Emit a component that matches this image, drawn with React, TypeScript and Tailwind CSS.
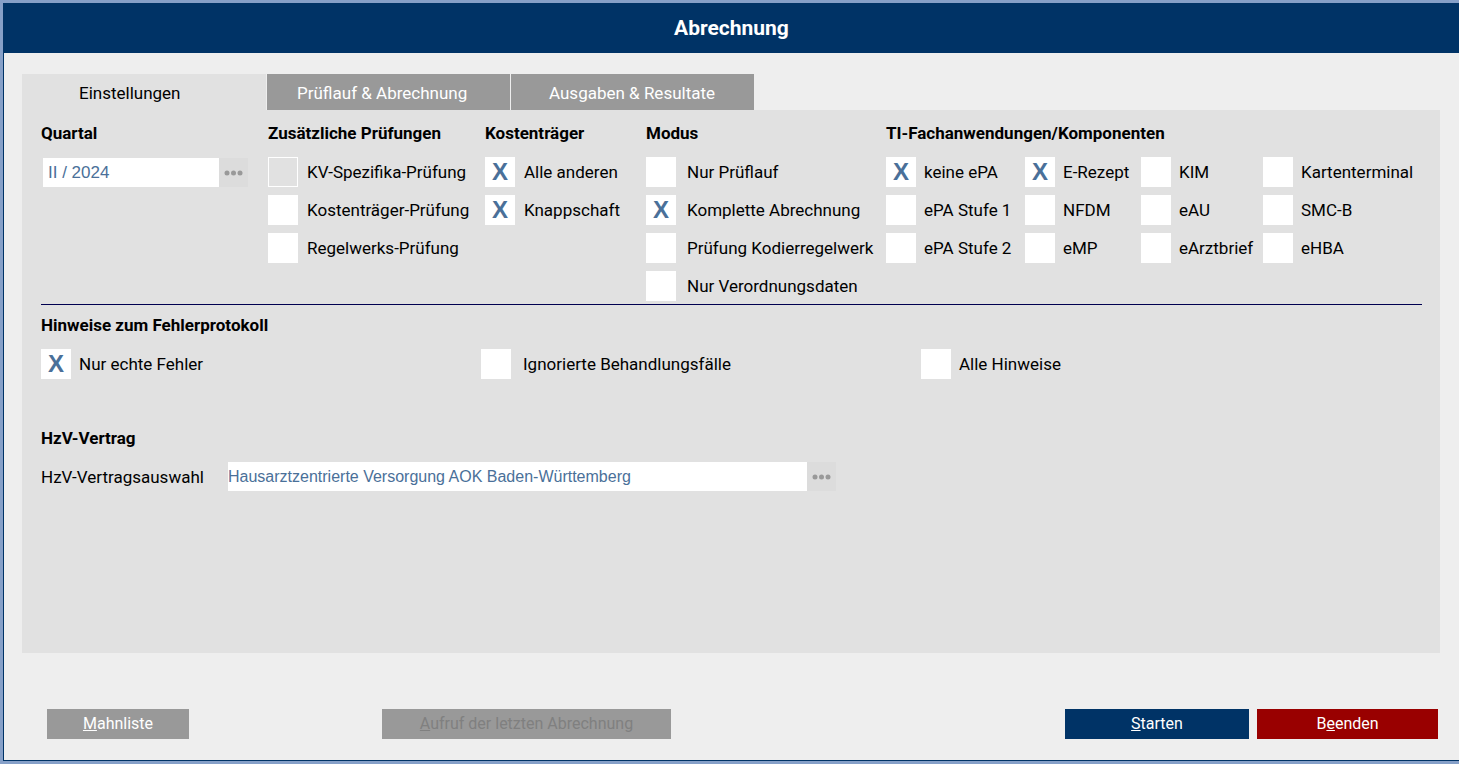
import { useState } from 'react';
import { clsx } from 'clsx';

interface Option {
  id: string;
  label: string;
  checked?: boolean;
  disabled?: boolean;
  gap?: string;
}

// --- OPTIONEN ---
const pruefungen: Option[] = [
  { id: 'kv-spezifika', label: 'KV-Spezifika-Prüfung', disabled: true },
  { id: 'kt-pruefung', label: 'Kostenträger-Prüfung' },
  { id: 'regelwerk', label: 'Regelwerks-Prüfung' },
];

const kostentraeger: Option[] = [
  { id: 'alle-anderen', label: 'Alle anderen', checked: true },
  { id: 'knappschaft', label: 'Knappschaft', checked: true },
];

const modus: Option[] = [
  { id: 'nur-prueflauf', label: 'Nur Prüflauf' },
  { id: 'komplett', label: 'Komplette Abrechnung', checked: true },
  { id: 'kodierregelwerk', label: 'Prüfung Kodierregelwerk' },
  { id: 'verordnungsdaten', label: 'Nur Verordnungsdaten' },
];

const komponenten: Option[] = [
  { id: 'keine-epa', label: 'keine ePA', checked: true },
  { id: 'e-rezept', label: 'E-Rezept', checked: true },
  { id: 'kim', label: 'KIM' },
  { id: 'kartenterminal', label: 'Kartenterminal' },
  { id: 'epa-1', label: 'ePA Stufe 1' },
  { id: 'nfdm', label: 'NFDM' },
  { id: 'eau', label: 'eAU' },
  { id: 'smc-b', label: 'SMC-B' },
  { id: 'epa-2', label: 'ePA Stufe 2' },
  { id: 'emp', label: 'eMP' },
  { id: 'earztbrief', label: 'eArztbrief' },
  { id: 'ehba', label: 'eHBA' },
];

const hinweise: Option[] = [
  { id: 'echte-fehler', label: 'Nur echte Fehler', checked: true },
  { id: 'ignorierte', label: 'Ignorierte Behandlungsfälle', gap: 'gap-3' },
  { id: 'alle-hinweise', label: 'Alle Hinweise' },
];

const tabs = [
  { label: 'Einstellungen', size: 'w-[245px] pl-[57px]' },
  { label: 'Prüflauf & Abrechnung', size: 'w-[244px] pl-[30px]' },
  { label: 'Ausgaben & Resultate', size: 'w-[243px] pl-[38px]' },
];

function Check({ option, gap = 'gap-2' }: { option: Option; gap?: string }) {
  const [checked, setChecked] = useState(!!option.checked);

  return (
    <div className={clsx('flex items-center', option.gap ?? gap)}>
      <div className="grid size-[30px] shrink-0 place-items-center">
        <input
          id={option.id}
          type="checkbox"
          checked={checked}
          disabled={option.disabled}
          onChange={(e) => setChecked(e.target.checked)}
          className="[grid-area:1/1] size-[30px] appearance-none border border-white bg-white disabled:bg-transparent"
        />
        {checked && (
          <span className="pointer-events-none [grid-area:1/1] font-['Liberation_Sans',sans-serif] text-2xl leading-[30px] font-bold text-[#4a7099]">
            X
          </span>
        )}
      </div>
      <label htmlFor={option.id} className="whitespace-nowrap">{option.label}</label>
    </div>
  );
}

function Group({ title, options, gap }: { title: string; options: Option[]; gap: string }) {
  return (
    <section>
      <h2 className="mb-3 font-bold whitespace-nowrap">{title}</h2>
      <div className="flex flex-col gap-2">
        {options.map((o) => <Check key={o.id} option={o} gap={gap} />)}
      </div>
    </section>
  );
}

function MoreButton({ label }: { label: string }) {
  return (
    <button aria-label={label} className="flex size-[29px] shrink-0 items-center justify-center bg-[#dcdcdc]">
      <svg width="20" height="6" viewBox="0 0 20 6" fill="#999999">
        <circle cx="3" cy="3" r="2.5" />
        <circle cx="9.5" cy="3" r="2.5" />
        <circle cx="16" cy="3" r="2.5" />
      </svg>
    </button>
  );
}

function App() {
  const [activeTab, setActiveTab] = useState(0);

  return (
    <div className="flex min-h-screen flex-col bg-[#86a0c8] pt-[3px] pb-[3px] pl-[3px] font-['Roboto',sans-serif] text-[17px] leading-6 text-black">
      <div className="flex flex-1 flex-col border-b border-l border-[#003366] bg-[#eeeeee]">
        <header className="flex h-[50px] items-center justify-center bg-[#003366]">
          <h1 className="text-[21px] font-bold text-white">Abrechnung</h1>
        </header>

        <main className="mt-[21px] mr-[19px] ml-[18px] flex flex-1 flex-col">
          {/* Reiter */}
          <div role="tablist" className="flex">
            {tabs.map((tab, i) => (
              <button
                key={tab.label}
                role="tab"
                aria-selected={i === activeTab}
                onClick={() => setActiveTab(i)}
                className={clsx(
                  'h-9 pt-[2px] text-left',
                  tab.size,
                  i < 2 && 'border-r border-[#eeeeee]',
                  i === activeTab ? 'bg-[#e1e1e1]' : 'bg-[#999999] text-white'
                )}
              >
                {tab.label}
              </button>
            ))}
          </div>

          <div className="flex-1 bg-[#e1e1e1] pt-[11px] pr-[18px] pb-6 pl-[19px]">
            <div className="grid grid-cols-[227fr_217fr_161fr_240fr_536fr] border-b border-[#000050] pb-[3px]">
              <section>
                <h2 className="mb-3 font-bold"><label htmlFor="quartal">Quartal</label></h2>
                <div className="flex pt-px pl-[2px]">
                  <input
                    id="quartal"
                    defaultValue="II / 2024"
                    className="h-[29px] w-44 bg-white px-[5px] font-['Liberation_Sans',sans-serif] text-[#4a7099] outline-none"
                  />
                  <MoreButton label="Quartal auswählen" />
                </div>
              </section>
              <Group title="Zusätzliche Prüfungen" options={pruefungen} gap="gap-[9px]" />
              <Group title="Kostenträger" options={kostentraeger} gap="gap-[9px]" />
              <Group title="Modus" options={modus} gap="gap-[11px]" />
              <section>
                <h2 className="mb-3 font-bold">TI-Fachanwendungen/Komponenten</h2>
                <div className="grid grid-cols-[139fr_116fr_122fr_159fr] gap-y-2">
                  {komponenten.map((o) => <Check key={o.id} option={o} />)}
                </div>
              </section>
            </div>

            <section className="pt-2">
              <h2 className="mb-3 font-bold">Hinweise zum Fehlerprotokoll</h2>
              <div className="grid grid-cols-[440fr_440fr_501fr]">
                {hinweise.map((o) => <Check key={o.id} option={o} />)}
              </div>
            </section>

            <section className="pt-[47px]">
              <h2 className="mb-3 font-bold">HzV-Vertrag</h2>
              <div className="flex items-center">
                <label htmlFor="hzv" className="w-[187px] shrink-0">HzV-Vertragsauswahl</label>
                <input
                  id="hzv"
                  defaultValue="Hausarztzentrierte Versorgung AOK Baden-Württemberg"
                  className="h-[29px] w-[579px] bg-white font-['Liberation_Sans',sans-serif] text-base text-[#4a7099] outline-none"
                />
                <MoreButton label="Vertrag auswählen" />
              </div>
            </section>
          </div>
        </main>

        {/* Aktionen */}
        <footer className="mt-14 mr-[21px] mb-[21px] ml-[43px] flex text-base">
          <button className="h-[30px] w-[142px] bg-[#999999] text-white"><u>M</u>ahnliste</button>
          <button disabled className="ml-[193px] h-[30px] w-[289px] bg-[#999999] text-[#808080]">
            <u>A</u>ufruf der letzten Abrechnung
          </button>
          <button className="mr-2 ml-auto h-[30px] w-[184px] bg-[#003366] text-white"><u>S</u>tarten</button>
          <button className="h-[30px] w-[181px] bg-[#990000] text-white">B<u>e</u>enden</button>
        </footer>
      </div>
    </div>
  );
}

export default App;
